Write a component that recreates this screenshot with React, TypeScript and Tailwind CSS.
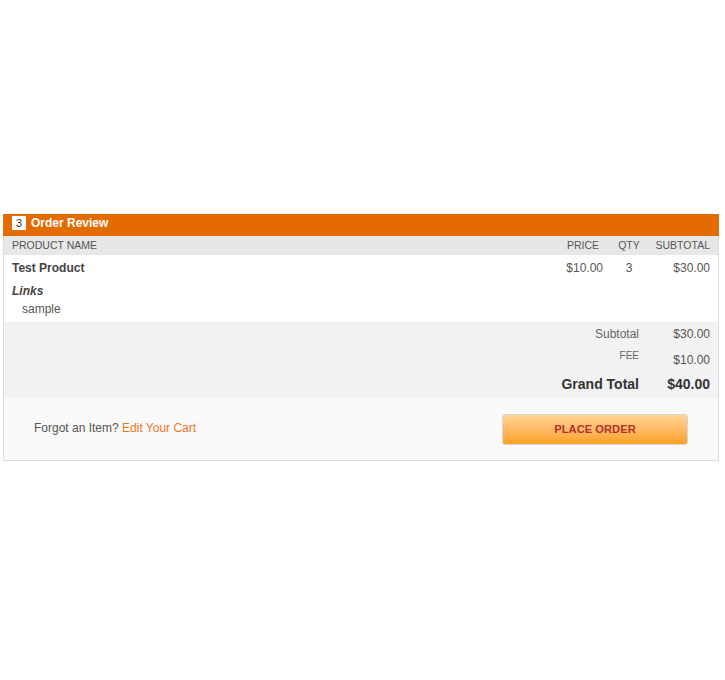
export default function App() {
  return (
    <div className="w-[725px] h-[680px] bg-white pt-[214px] pl-[3px]" style={{ fontFamily: '"Liberation Sans", Arial, sans-serif' }}>
      <div className="w-[716px]">
        <div className="h-[22px] bg-[#e46b00] flex items-start pt-[2px] pl-[9px] gap-[5px]">
          <span className="w-[14px] h-[14px] bg-white text-[#333] text-[11px] leading-[14px] text-center">3</span>
          <span className="text-white font-bold text-[12px] leading-[14px]">Order Review</span>
        </div>
        <div className="border-l border-r border-[#dcdcdc]">
          <div className="flex items-center h-[19px] bg-[#e7e7e7] text-[10.5px] text-[#555] uppercase">
            <div className="flex-1 pl-[8px]">Product Name</div>
            <div className="w-[70px] text-right pr-[12px]">Price</div>
            <div className="w-[36px] text-center">Qty</div>
            <div className="w-[71px] text-right pr-[8px]">Subtotal</div>
          </div>
          <div className="flex bg-white text-[12px] leading-[15px] text-[#555] pt-[6px] h-[67px]">
            <div className="flex-1 pl-[8px]">
              <div className="font-bold text-[#444]">Test Product</div>
              <div className="font-bold italic text-[#444] mt-[8px]">Links</div>
              <div className="pl-[10px] mt-[3px]">sample</div>
            </div>
            <div className="w-[70px] text-right pr-[8px]">$10.00</div>
            <div className="w-[36px] text-center">3</div>
            <div className="w-[71px] text-right pr-[8px]">$30.00</div>
          </div>
          <div className="bg-[#f2f2f2] h-[76px] text-[#555]">
            <div className="flex justify-end h-[24px] items-center text-[12px]">
              <span className="text-right text-[#666]">Subtotal</span>
              <span className="w-[79px] text-right pr-[8px]">$30.00</span>
            </div>
            <div className="flex justify-end h-[24px] text-[12px]">
              <span className="text-right text-[10px] text-[#666] pt-[2px]">FEE</span>
              <span className="w-[79px] text-right pr-[8px] pt-[5px]">$10.00</span>
            </div>
            <div className="flex justify-end h-[28px] items-center text-[14px] font-bold text-[#333]">
              <span className="text-right">Grand Total</span>
              <span className="w-[79px] text-right pr-[8px]">$40.00</span>
            </div>
          </div>
          <div className="bg-[#fafafa] border-b border-[#dcdcdc] h-[63px] flex items-center justify-between pl-[30px] pr-[30px]">
            <div className="text-[12px] text-[#555] -mt-[3px]">
              Forgot an Item? <span className="text-[#f0761e]">Edit Your Cart</span>
            </div>
            <button className="w-[186px] h-[31px] rounded-[3px] border border-[#d6d6d6] bg-gradient-to-b from-[#ffd595] to-[#ffa01c] text-[#b5302a] text-[11.2px] font-bold">PLACE ORDER</button>
          </div>
        </div>
      </div>
    </div>
  );
}
